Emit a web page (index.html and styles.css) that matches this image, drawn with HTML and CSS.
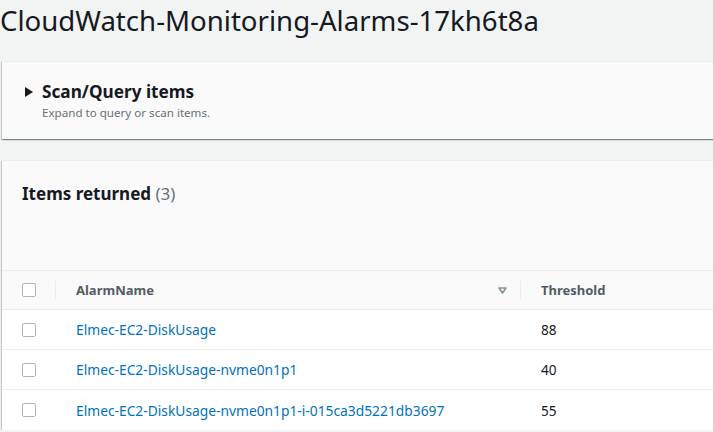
FILE: index.html
```html
<!DOCTYPE html>
<html>
<head>
<meta charset="utf-8">
<link rel="stylesheet" href="styles.css">
</head>
<body>
<div class="page">
  <h1 class="title">CloudWatch-Monitoring-Alarms-17kh6t8a</h1>

  <section class="panel scan">
    <div class="scan-head">
      <svg class="caret" width="8" height="10" viewBox="0 0 8 10"><polygon points="0,0 8,5 0,10" fill="#16191f"/></svg>
      <div>
        <h2 class="scan-title">Scan/Query items</h2>
        <p class="scan-desc">Expand to query or scan items.</p>
      </div>
    </div>
  </section>

  <section class="panel items">
    <div class="items-head">
      <h2 class="items-title">Items returned <span class="count">(3)</span></h2>
    </div>
    <div class="table">
      <div class="row head">
        <div class="cell check sep"><span class="box"></span></div>
        <div class="cell name sep">AlarmName
          <svg class="sort" width="9" height="7" viewBox="0 0 9 7"><polygon points="1,1 8,1 4.5,6" fill="none" stroke="#879596" stroke-width="1.6" stroke-linejoin="round"/></svg>
        </div>
        <div class="cell thr">Threshold</div>
      </div>
      <div class="row">
        <div class="cell check"><span class="box"></span></div>
        <div class="cell name"><a class="link">Elmec-EC2-DiskUsage</a></div>
        <div class="cell thr num">88</div>
      </div>
      <div class="row">
        <div class="cell check"><span class="box"></span></div>
        <div class="cell name"><a class="link">Elmec-EC2-DiskUsage-nvme0n1p1</a></div>
        <div class="cell thr num">40</div>
      </div>
      <div class="row">
        <div class="cell check"><span class="box"></span></div>
        <div class="cell name"><a class="link">Elmec-EC2-DiskUsage-nvme0n1p1-i-015ca3d5221db3697</a></div>
        <div class="cell thr num">55</div>
      </div>
    </div>
  </section>
</div>
</body>
</html>
```

FILE: styles.css
```css
html, body {
  margin: 0;
  padding: 0;
  background: #f2f3f3;
  overflow: hidden;
  font-family: "Noto Sans", "Open Sans", sans-serif;
  color: #16191f;
}

.page {
  padding: 0 0 0 2px;
  margin-right: -30px;
}

.title {
  margin: 0;
  padding-top: 2px;
  height: 59px;
  font-size: 27.6px;
  font-weight: 400;
  line-height: 36px;
  color: #16191f;
  margin-left: -2px;
}

.panel {
  background: #fafafa;
  border-top: 1px solid #eaeded;
  box-shadow: 0 1px 1px 0 rgba(0, 28, 36, 0.3), 1px 1px 1px 0 rgba(0, 28, 36, 0.15), -1px 1px 1px 0 rgba(0, 28, 36, 0.15);
}

.scan {
  height: 77px;
  margin-bottom: 21px;
}

.scan-head {
  display: flex;
  align-items: flex-start;
  gap: 9px;
  padding: 19px 0 0 23px;
}

.caret {
  margin-top: 6px;
}

.scan-title {
  margin: 0;
  font-size: 17.2px;
  font-weight: 700;
  line-height: 22px;
}

.scan-desc {
  margin: 2px 0 0;
  font-size: 11.6px;
  line-height: 16px;
  color: #687078;
}

.items-head {
  height: 110px;
  border-bottom: 1px solid #eaeded;
  padding: 21px 0 0 20px;
  box-sizing: border-box;
}

.items-title {
  margin: 0;
  font-size: 17px;
  font-weight: 700;
  line-height: 24px;
}

.count {
  font-weight: 400;
  color: #687078;
}

.table {
  display: flex;
  flex-direction: column;
}

.row {
  display: grid;
  grid-template-columns: 54px 465px 1fr;
  height: 39px;
  align-items: center;
  background: #fff;
  border-bottom: 1px solid #eaeded;
}

.row:last-child {
  border-bottom: none;
  height: 40px;
}

.row.head {
  background: #fafafa;
  height: 38px;
  font-size: 13px;
  font-weight: 700;
  color: #545b64;
  border-bottom: 1px solid #eaeded;
}

.cell {
  position: relative;
  height: 100%;
  display: flex;
  align-items: center;
}

.check {
  padding-left: 20px;
}

.name {
  padding-left: 20px;
}

.thr {
  padding-left: 20px;
}

.sep::after {
  content: "";
  position: absolute;
  right: 0;
  top: 10px;
  bottom: 10px;
  width: 1px;
  background: #eaeded;
}

.box {
  width: 12px;
  height: 12px;
  border: 1px solid #aab7b8;
  border-radius: 2px;
  background: #fff;
}

.sort {
  position: absolute;
  right: 14px;
  top: 16px;
}

.link {
  color: #0073bb;
  font-size: 13.8px;
  text-decoration: none;
}

.num {
  font-size: 13.6px;
  color: #16191f;
}
```
